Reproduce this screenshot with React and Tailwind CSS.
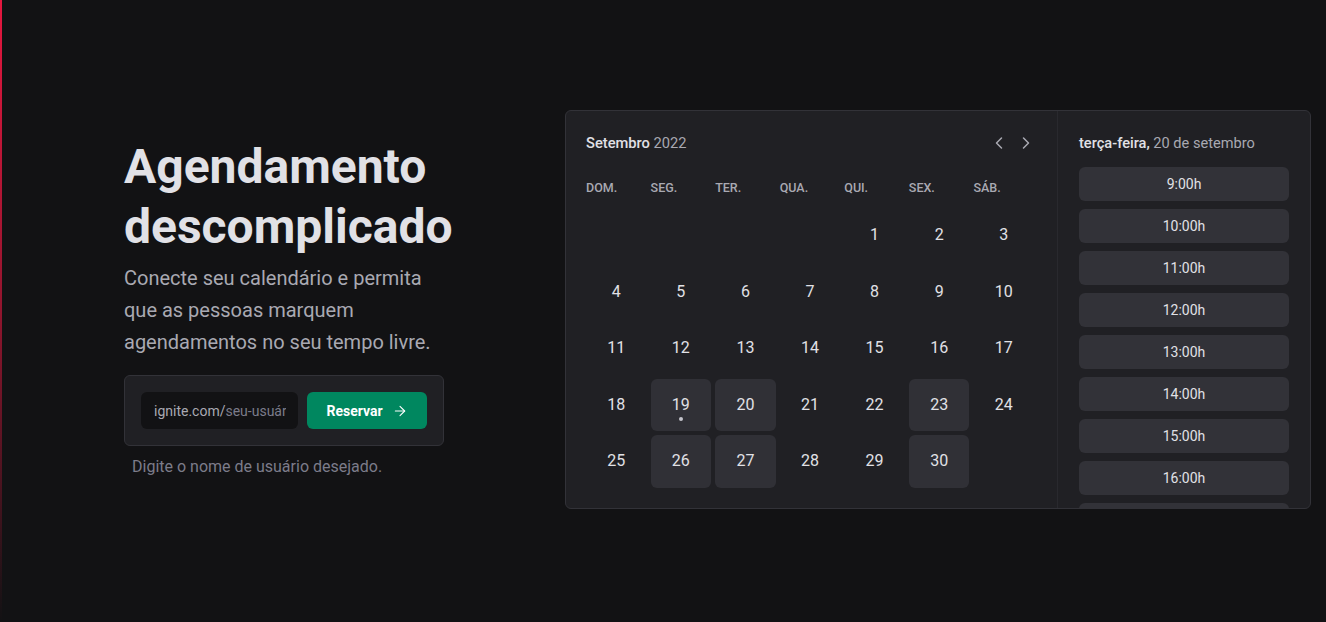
import React from 'react'
import { ArrowRight, ChevronLeft, ChevronRight } from 'lucide-react'

const WEEK_DAYS = ['dom.', 'seg.', 'ter.', 'qua.', 'qui.', 'sex.', 'sáb.']
const AVAILABLE = [19, 20, 23, 26, 27, 30]
const TIMES = [9, 10, 11, 12, 13, 14, 15, 16, 17]

function buildWeeks(){
  // setembro 2022 começa numa quinta-feira
  const cells = [null, null, null, null]
  for(let d = 1; d <= 30; d++) cells.push(d)
  while(cells.length % 7 !== 0) cells.push(null)
  const weeks = []
  for(let i = 0; i < cells.length; i += 7) weeks.push(cells.slice(i, i + 7))
  return weeks
}

function Calendar(){
  const weeks = buildWeeks()
  return (
    <div className="w-[491px] shrink-0 px-5 pt-[22px]">
      <div className="flex h-5 w-[450px] items-center justify-between">
        <h2 className="text-[14.7px] font-medium leading-5 text-[#e1e1e6]">
          Setembro <span className="font-normal text-[#a9a9b2]">2022</span>
        </h2>
        <div className="flex items-center gap-[7px] text-[#a9a9b2]">
          <ChevronLeft size={20} strokeWidth={1.8} />
          <ChevronRight size={20} strokeWidth={1.8} />
        </div>
      </div>

      <div className="mt-[27px] grid w-[448px] grid-cols-7 gap-x-1">
        {WEEK_DAYS.map(d => (
          <span key={d} className="text-left text-[12.5px] font-medium uppercase leading-4 text-[#a9a9b2]">{d}</span>
        ))}
      </div>

      <div className="mt-[13px] grid w-[448px] grid-cols-7 gap-1">
        {weeks.flat().map((day, i) => {
          if(!day) return <div key={i} className="h-[52.5px]" />
          const available = AVAILABLE.includes(day)
          return (
            <button
              key={i}
              className={
                available
                  ? 'relative flex h-[52.5px] items-center justify-center rounded-md bg-[#303036] text-base text-[#e1e1e6]'
                  : 'relative flex h-[52.5px] items-center justify-center rounded-md bg-transparent text-base text-[#e1e1e6]'
              }
            >
              {day}
              {day === 19 && (
                <span className="absolute bottom-[10px] left-1/2 h-1 w-1 -translate-x-1/2 rounded-full bg-[#c4c4cc]" />
              )}
            </button>
          )
        })}
      </div>
    </div>
  )
}

function TimePicker(){
  return (
    <div className="flex flex-1 flex-col overflow-hidden border-l border-[#29292e] px-[21px] pt-[22px]">
      <h3 className="text-[14.6px] font-medium leading-5 text-[#e1e1e6]">
        terça-feira, <span className="font-normal text-[#a9a9b2]">20 de setembro</span>
      </h3>
      <div className="mt-[14px] flex flex-col gap-2">
        {TIMES.map(t => (
          <button key={t} className="flex h-[34px] shrink-0 items-center justify-center rounded-md bg-[#323238] text-sm text-[#e1e1e6]">
            {t}:00h
          </button>
        ))}
      </div>
    </div>
  )
}

export default function App(){
  return (
    <div className="relative flex h-screen min-h-[622px] w-full items-center overflow-hidden bg-[#121214] pl-[124px]" style={{ fontFamily: 'Roboto, "Noto Sans", sans-serif' }}>
      <div className="absolute left-0 top-0 h-full w-[2px] bg-linear-to-b from-[#e5173f] via-[#e5173f]/60 to-transparent" />

      <div className="mt-[-5px] w-[361px] shrink-0">
        <h1 className="text-[48px] font-bold leading-[1.25] text-[#e1e1e6]">Agendamento descomplicado</h1>
        <p className="mt-[5px] whitespace-nowrap text-xl leading-8 text-[#a9a9b2]">
          Conecte seu calendário e permita<br />
          que as pessoas marquem<br />
          agendamentos no seu tempo livre.
        </p>

        <form className="mt-[17px] flex w-[320px] gap-[9px] rounded-md border border-[#323238] bg-[#202024] p-4" onSubmit={e => e.preventDefault()}>
          <div className="flex h-[37px] w-[157px] items-center overflow-hidden rounded-md bg-[#121214] pl-[13px] pr-3 text-sm">
            <span className="shrink-0 text-[#a9a9b2]">ignite.com/</span>
            <input
              className="min-w-0 flex-1 bg-transparent text-sm text-[#e1e1e6] outline-none placeholder:text-[#7c7c8a]"
              placeholder="seu-usuário"
            />
          </div>
          <button type="submit" className="flex h-[37px] w-[120px] items-center justify-center gap-[9px] rounded-md bg-[#00875f] text-sm font-bold text-white">
            Reservar
            <ArrowRight size={16} strokeWidth={1.6} />
          </button>
        </form>

        <p className="mt-2 pl-2 text-base leading-[1.6] text-[#7c7c8a]">Digite o nome de usuário desejado.</p>
      </div>

      <div className="ml-[80px] mt-[-3px] flex h-[399px] w-[746px] shrink-0 overflow-hidden rounded-md border border-[#323238] bg-[#202024]">
        <Calendar />
        <TimePicker />
      </div>
    </div>
  )
}
